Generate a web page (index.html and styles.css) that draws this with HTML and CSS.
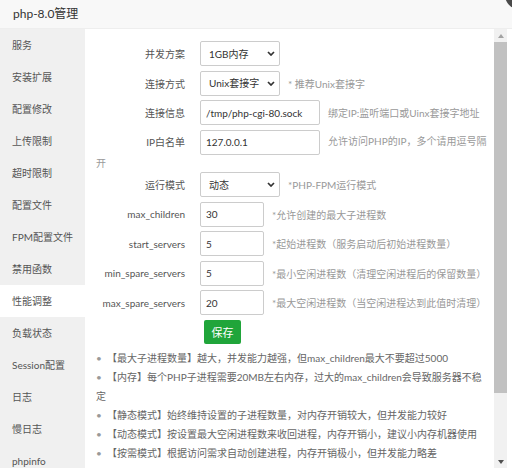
FILE: index.html
```html
<!DOCTYPE html>
<html lang="zh-CN">
<head>
<meta charset="utf-8">
<title>php-8.0管理</title>
<link rel="stylesheet" href="styles.css">
</head>
<body>
<div class="title">php-8.0管理</div>
<span class="close"></span>
<div class="main">
  <ul class="side">
    <li>服务</li>
    <li>安装扩展</li>
    <li>配置修改</li>
    <li>上传限制</li>
    <li>超时限制</li>
    <li>配置文件</li>
    <li>FPM配置文件</li>
    <li>禁用函数</li>
    <li class="on">性能调整</li>
    <li>负载状态</li>
    <li>Session配置</li>
    <li>日志</li>
    <li>慢日志</li>
    <li>phpinfo</li>
  </ul>
  <div class="content">
    <div class="inner">
      <div class="line">
        <span class="tname">并发方案</span>
        <span class="sel"><select><option>1GB内存</option></select><svg class="chev" width="8" height="5" viewBox="0 0 8 5"><path d="M1 1L4 4L7 1" fill="none" stroke="#333" stroke-width="1.7"/></svg></span>
      </div>
      <div class="line">
        <span class="tname">连接方式</span>
        <span class="sel"><select><option>Unix套接字</option></select><svg class="chev" width="8" height="5" viewBox="0 0 8 5"><path d="M1 1L4 4L7 1" fill="none" stroke="#333" stroke-width="1.7"/></svg></span>
        <span class="tips">* 推荐Unix套接字</span>
      </div>
      <div class="line">
        <span class="tname">连接信息</span>
        <input class="inp wide" type="text" value="/tmp/php-cgi-80.sock">
        <span class="tips">绑定IP:监听端口或Uinx套接字地址</span>
      </div>
      <div class="line wrap"><span class="tname">IP白名单</span><input class="inp wide" type="text" value="127.0.0.1">允许访问PHP的IP，多个请用逗号隔开</div>
      <div class="line">
        <span class="tname">运行模式</span>
        <span class="sel"><select><option>动态</option></select><svg class="chev" width="8" height="5" viewBox="0 0 8 5"><path d="M1 1L4 4L7 1" fill="none" stroke="#333" stroke-width="1.7"/></svg></span>
        <span class="tips">*PHP-FPM运行模式</span>
      </div>
      <div class="line">
        <span class="tname">max_children</span>
        <input class="inp small" type="text" value="30">
        <span class="tips">*允许创建的最大子进程数</span>
      </div>
      <div class="line">
        <span class="tname">start_servers</span>
        <input class="inp small" type="text" value="5">
        <span class="tips">*起始进程数（服务启动后初始进程数量）</span>
      </div>
      <div class="line">
        <span class="tname">min_spare_servers</span>
        <input class="inp small" type="text" value="5">
        <span class="tips">*最小空闲进程数（清理空闲进程后的保留数量）</span>
      </div>
      <div class="line">
        <span class="tname">max_spare_servers</span>
        <input class="inp small" type="text" value="20">
        <span class="tips">*最大空闲进程数（当空闲进程达到此值时清理）</span>
      </div>
      <div class="btnrow"><button class="btn" type="button">保存</button></div>
      <ul class="notes">
        <li>【最大子进程数量】越大，并发能力越强，但max_children最大不要超过5000</li>
        <li>【内存】每个PHP子进程需要20MB左右内存，过大的max_children会导致服务器不稳定</li>
        <li>【静态模式】始终维持设置的子进程数量，对内存开销较大，但并发能力较好</li>
        <li>【动态模式】按设置最大空闲进程数来收回进程，内存开销小，建议小内存机器使用</li>
        <li>【按需模式】根据访问需求自动创建进程，内存开销极小，但并发能力略差</li>
      </ul>
    </div>
  </div>
  <div class="scrollbar">
    <div class="sb-btn"><svg width="6" height="4" viewBox="0 0 6 4"><path d="M0 4L3 0L6 4Z" fill="#a3a3a3"/></svg></div>
    <div class="sb-thumb"></div>
    <div class="sb-rest"></div>
    <div class="sb-btn"><svg width="6" height="4" viewBox="0 0 6 4"><path d="M0 0L3 4L6 0Z" fill="#505050"/></svg></div>
  </div>
</div>
</body>
</html>
```
FILE: styles.css
```css
* { box-sizing: border-box; }
html, body {
  margin: 0;
  padding: 0;
  background: #fff;
  overflow: hidden;
}
body {
  width: 512px;
  height: 468px;
  position: relative;
  font-family: Lato, "Noto Sans CJK SC", sans-serif;
  color: #555;
}
.title {
  height: 29px;
  line-height: 28px;
  padding-left: 13px;
  font-size: 12px;
  color: #333;
  background: #f8f8f8;
  border-bottom: 1px solid #eee;
}
.close {
  position: absolute;
  left: 505px;
  top: -19px;
  width: 28px;
  height: 28px;
  border-radius: 50%;
  background: #4a4a4a;
}
.main {
  display: flex;
  width: 507px;
  height: 439px;
}
.side {
  list-style: none;
  margin: 0;
  padding: 0;
  width: 85px;
  flex: none;
  background: #f0f0f0;
}
.side li {
  height: 32px;
  line-height: 32px;
  padding-left: 12px;
  font-size: 10px;
  color: #555;
}
.side li.on { background: #fff; }
.content {
  flex: 1;
  height: 439px;
  overflow: hidden;
}
.scrollbar {
  width: 13px;
  flex: none;
  display: flex;
  flex-direction: column;
  background: #f1f1f1;
}
.sb-btn {
  height: 13px;
  display: flex;
  align-items: center;
  justify-content: center;
}
.sb-thumb {
  height: 351px;
  background: #c1c1c1;
}
.sb-rest { flex: 1; }
.inner {
  padding: 12px 5px 0 11px;
  font-size: 10px;
}
.line {
  display: flex;
  align-items: center;
  height: 25px;
  margin-bottom: 4.5px;
}
.line.wrap {
  display: block;
  height: auto;
  line-height: 17px;
  margin-bottom: 0.5px;
  color: #999;
}
.line.wrap .tname, .line.wrap .inp { vertical-align: middle; }
.line.wrap .inp { margin-right: 8px; }
.tname {
  display: inline-block;
  width: 89px;
  margin-right: 15px;
  text-align: right;
  color: #555;
  flex: none;
}
.sel {
  position: relative;
  display: inline-block;
  flex: none;
}
.sel select {
  -webkit-appearance: none;
  appearance: none;
  display: block;
  width: 80px;
  height: 25px;
  padding: 0 14px 0 8px;
  border: 1px solid #ccc;
  border-radius: 2px;
  background: #fff;
  font-family: Lato, "Noto Sans CJK SC", sans-serif;
  font-size: 10px;
  color: #333;
  outline: none;
}
.chev {
  position: absolute;
  right: 5px;
  top: 10px;
  pointer-events: none;
}
.inp {
  display: inline-block;
  height: 25px;
  padding: 0 5px;
  border: 1px solid #ccc;
  border-radius: 2px;
  font-family: Lato, "Noto Sans CJK SC", sans-serif;
  font-size: 10px;
  color: #333;
  outline: none;
  flex: none;
}
.inp.wide { width: 120px; }
.inp.small { width: 64px; }
.tips {
  margin-left: 8px;
  color: #999;
  white-space: nowrap;
}
.btnrow {
  padding-left: 108px;
  height: 24px;
}
.btn {
  display: block;
  width: 37px;
  height: 24px;
  padding: 0;
  border: none;
  border-radius: 2px;
  background: #20a53a;
  color: #fff;
  font-family: Lato, "Noto Sans CJK SC", sans-serif;
  font-size: 11px;
}
.notes {
  list-style: none;
  margin: 5.5px 0 0;
  padding: 0;
  line-height: 19px;
  color: #666;
}
.notes li::before {
  content: "•";
  display: inline-block;
  width: 11px;
  color: #999;
}
```
